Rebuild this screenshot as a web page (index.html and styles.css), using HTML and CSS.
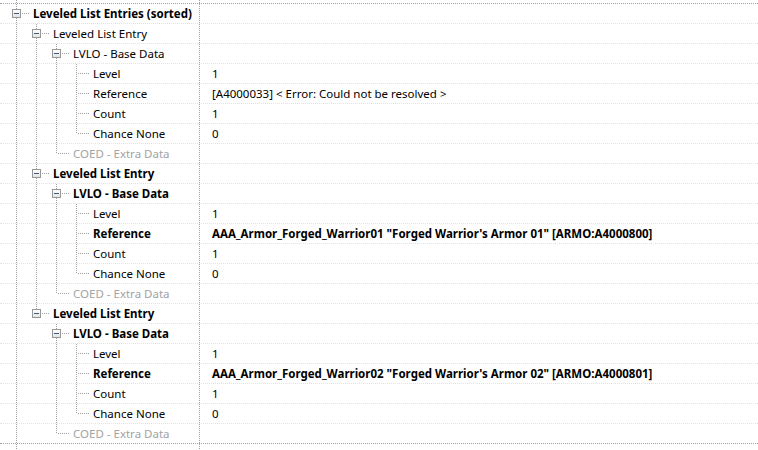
FILE: index.html
```html
<!DOCTYPE html>
<html lang="en">

<head>
    <meta charset="UTF-8">
    <title>Leveled List Entries</title>
    <link rel="stylesheet" href="styles.css">
</head>

<body>
    <div class="tree">
        <div class="row top">
            <div class="name"><span class="g pipe short"></span></div>
            <div class="value"></div>
        </div>

        <div class="row">
            <div class="name bold"><span class="own tee"><span class="box"></span></span><span class="label">Leveled List Entries (sorted)</span></div>
            <div class="value"></div>
        </div>

        <!-- entry 1 -->
        <div class="row">
            <div class="name"><span class="g pipe"></span><span class="own tee"><span class="box"></span></span><span class="label">Leveled List Entry</span></div>
            <div class="value"></div>
        </div>
        <div class="row">
            <div class="name"><span class="g pipe"></span><span class="g pipe"></span><span class="own tee"><span class="box"></span></span><span class="label">LVLO - Base Data</span></div>
            <div class="value"></div>
        </div>
        <div class="row">
            <div class="name"><span class="g pipe"></span><span class="g pipe"></span><span class="g pipe"></span><span class="own tee"></span><span class="label">Level</span></div>
            <div class="value">1</div>
        </div>
        <div class="row">
            <div class="name"><span class="g pipe"></span><span class="g pipe"></span><span class="g pipe"></span><span class="own tee"></span><span class="label">Reference</span></div>
            <div class="value">[A4000033] &lt; Error: Could not be resolved &gt;</div>
        </div>
        <div class="row">
            <div class="name"><span class="g pipe"></span><span class="g pipe"></span><span class="g pipe"></span><span class="own tee"></span><span class="label">Count</span></div>
            <div class="value">1</div>
        </div>
        <div class="row">
            <div class="name"><span class="g pipe"></span><span class="g pipe"></span><span class="g pipe"></span><span class="own end"></span><span class="label">Chance None</span></div>
            <div class="value">0</div>
        </div>
        <div class="row">
            <div class="name muted"><span class="g pipe"></span><span class="g pipe"></span><span class="own end"></span><span class="label">COED - Extra Data</span></div>
            <div class="value"></div>
        </div>

        <!-- entry 2 -->
        <div class="row">
            <div class="name bold"><span class="g pipe"></span><span class="own tee"><span class="box"></span></span><span class="label">Leveled List Entry</span></div>
            <div class="value"></div>
        </div>
        <div class="row">
            <div class="name bold"><span class="g pipe"></span><span class="g pipe"></span><span class="own tee"><span class="box"></span></span><span class="label">LVLO - Base Data</span></div>
            <div class="value"></div>
        </div>
        <div class="row">
            <div class="name"><span class="g pipe"></span><span class="g pipe"></span><span class="g pipe"></span><span class="own tee"></span><span class="label">Level</span></div>
            <div class="value">1</div>
        </div>
        <div class="row">
            <div class="name bold"><span class="g pipe"></span><span class="g pipe"></span><span class="g pipe"></span><span class="own tee"></span><span class="label">Reference</span></div>
            <div class="value bold">AAA_Armor_Forged_Warrior01 "Forged Warrior's Armor 01" [ARMO:A4000800]</div>
        </div>
        <div class="row">
            <div class="name"><span class="g pipe"></span><span class="g pipe"></span><span class="g pipe"></span><span class="own tee"></span><span class="label">Count</span></div>
            <div class="value">1</div>
        </div>
        <div class="row">
            <div class="name"><span class="g pipe"></span><span class="g pipe"></span><span class="g pipe"></span><span class="own end"></span><span class="label">Chance None</span></div>
            <div class="value">0</div>
        </div>
        <div class="row">
            <div class="name muted"><span class="g pipe"></span><span class="g pipe"></span><span class="own end"></span><span class="label">COED - Extra Data</span></div>
            <div class="value"></div>
        </div>

        <!-- entry 3 -->
        <div class="row">
            <div class="name bold"><span class="g pipe"></span><span class="own end"><span class="box"></span></span><span class="label">Leveled List Entry</span></div>
            <div class="value"></div>
        </div>
        <div class="row">
            <div class="name bold"><span class="g pipe"></span><span class="g"></span><span class="own tee"><span class="box"></span></span><span class="label">LVLO - Base Data</span></div>
            <div class="value"></div>
        </div>
        <div class="row">
            <div class="name"><span class="g pipe"></span><span class="g"></span><span class="g pipe"></span><span class="own tee"></span><span class="label">Level</span></div>
            <div class="value">1</div>
        </div>
        <div class="row">
            <div class="name bold"><span class="g pipe"></span><span class="g"></span><span class="g pipe"></span><span class="own tee"></span><span class="label">Reference</span></div>
            <div class="value bold">AAA_Armor_Forged_Warrior02 "Forged Warrior's Armor 02" [ARMO:A4000801]</div>
        </div>
        <div class="row">
            <div class="name"><span class="g pipe"></span><span class="g"></span><span class="g pipe"></span><span class="own tee"></span><span class="label">Count</span></div>
            <div class="value">1</div>
        </div>
        <div class="row">
            <div class="name"><span class="g pipe"></span><span class="g"></span><span class="g pipe"></span><span class="own end"></span><span class="label">Chance None</span></div>
            <div class="value">0</div>
        </div>
        <div class="row group-end">
            <div class="name muted"><span class="g pipe"></span><span class="g"></span><span class="own end"></span><span class="label">COED - Extra Data</span></div>
            <div class="value"></div>
        </div>

        <div class="row">
            <div class="name muted"><span class="own tee"></span><span class="label">LLKC - Filter Keyword Chances</span></div>
            <div class="value"></div>
        </div>
    </div>
</body>

</html>
```

FILE: styles.css
```css
html,
body {
    margin: 0;
    height: 100%;
    overflow: hidden;
    background: #fff;
}

body {
    font-family: "Noto Sans", "Segoe UI", sans-serif;
    font-size: 11.5px;
    color: #000;
}

.row {
    display: flex;
    height: 20px;
    box-sizing: border-box;
    border-bottom: 1px dotted #e2e2e2;
}

.row.top {
    height: 4px;
    border-bottom-color: #a0a0a0;
}

.row.group-end {
    border-bottom-color: #a0a0a0;
}

.name {
    display: flex;
    align-items: stretch;
    flex: none;
    width: 200px;
    box-sizing: border-box;
    padding-left: 6px;
    border-right: 1px dotted #a0a0a0;
    overflow: hidden;
    white-space: nowrap;
}

.value {
    flex: 1;
    padding-left: 12px;
    line-height: 19px;
    white-space: nowrap;
}

.label {
    padding-left: 3px;
    line-height: 19px;
}

.bold {
    font-weight: bold;
}

.muted {
    color: #a3a3a3;
}

/* tree guides */
.g {
    flex: none;
    width: 20px;
}

.pipe {
    background: repeating-linear-gradient(to bottom, #a0a0a0 0 1px, transparent 1px 2px) 10px 0 / 1px 100% no-repeat;
}

.own {
    flex: none;
    display: flex;
    align-items: center;
    width: 24px;
}

.own.tee {
    background:
        repeating-linear-gradient(to bottom, #a0a0a0 0 1px, transparent 1px 2px) 10px 0 / 1px 100% no-repeat,
        repeating-linear-gradient(to right, #a0a0a0 0 1px, transparent 1px 2px) 12px 9px / 12px 1px no-repeat;
}

.own.end {
    background:
        repeating-linear-gradient(to bottom, #a0a0a0 0 1px, transparent 1px 2px) 10px 0 / 1px 10px no-repeat,
        repeating-linear-gradient(to right, #a0a0a0 0 1px, transparent 1px 2px) 12px 9px / 12px 1px no-repeat;
}

.box {
    display: flex;
    align-items: center;
    justify-content: center;
    width: 9px;
    height: 9px;
    margin-left: 6px;
    box-sizing: border-box;
    border: 1px solid #979797;
    background: linear-gradient(#ffffff, #e4e4e4);
}

.box::before {
    content: "";
    width: 5px;
    height: 1px;
    background: #3e5a86;
}
```
